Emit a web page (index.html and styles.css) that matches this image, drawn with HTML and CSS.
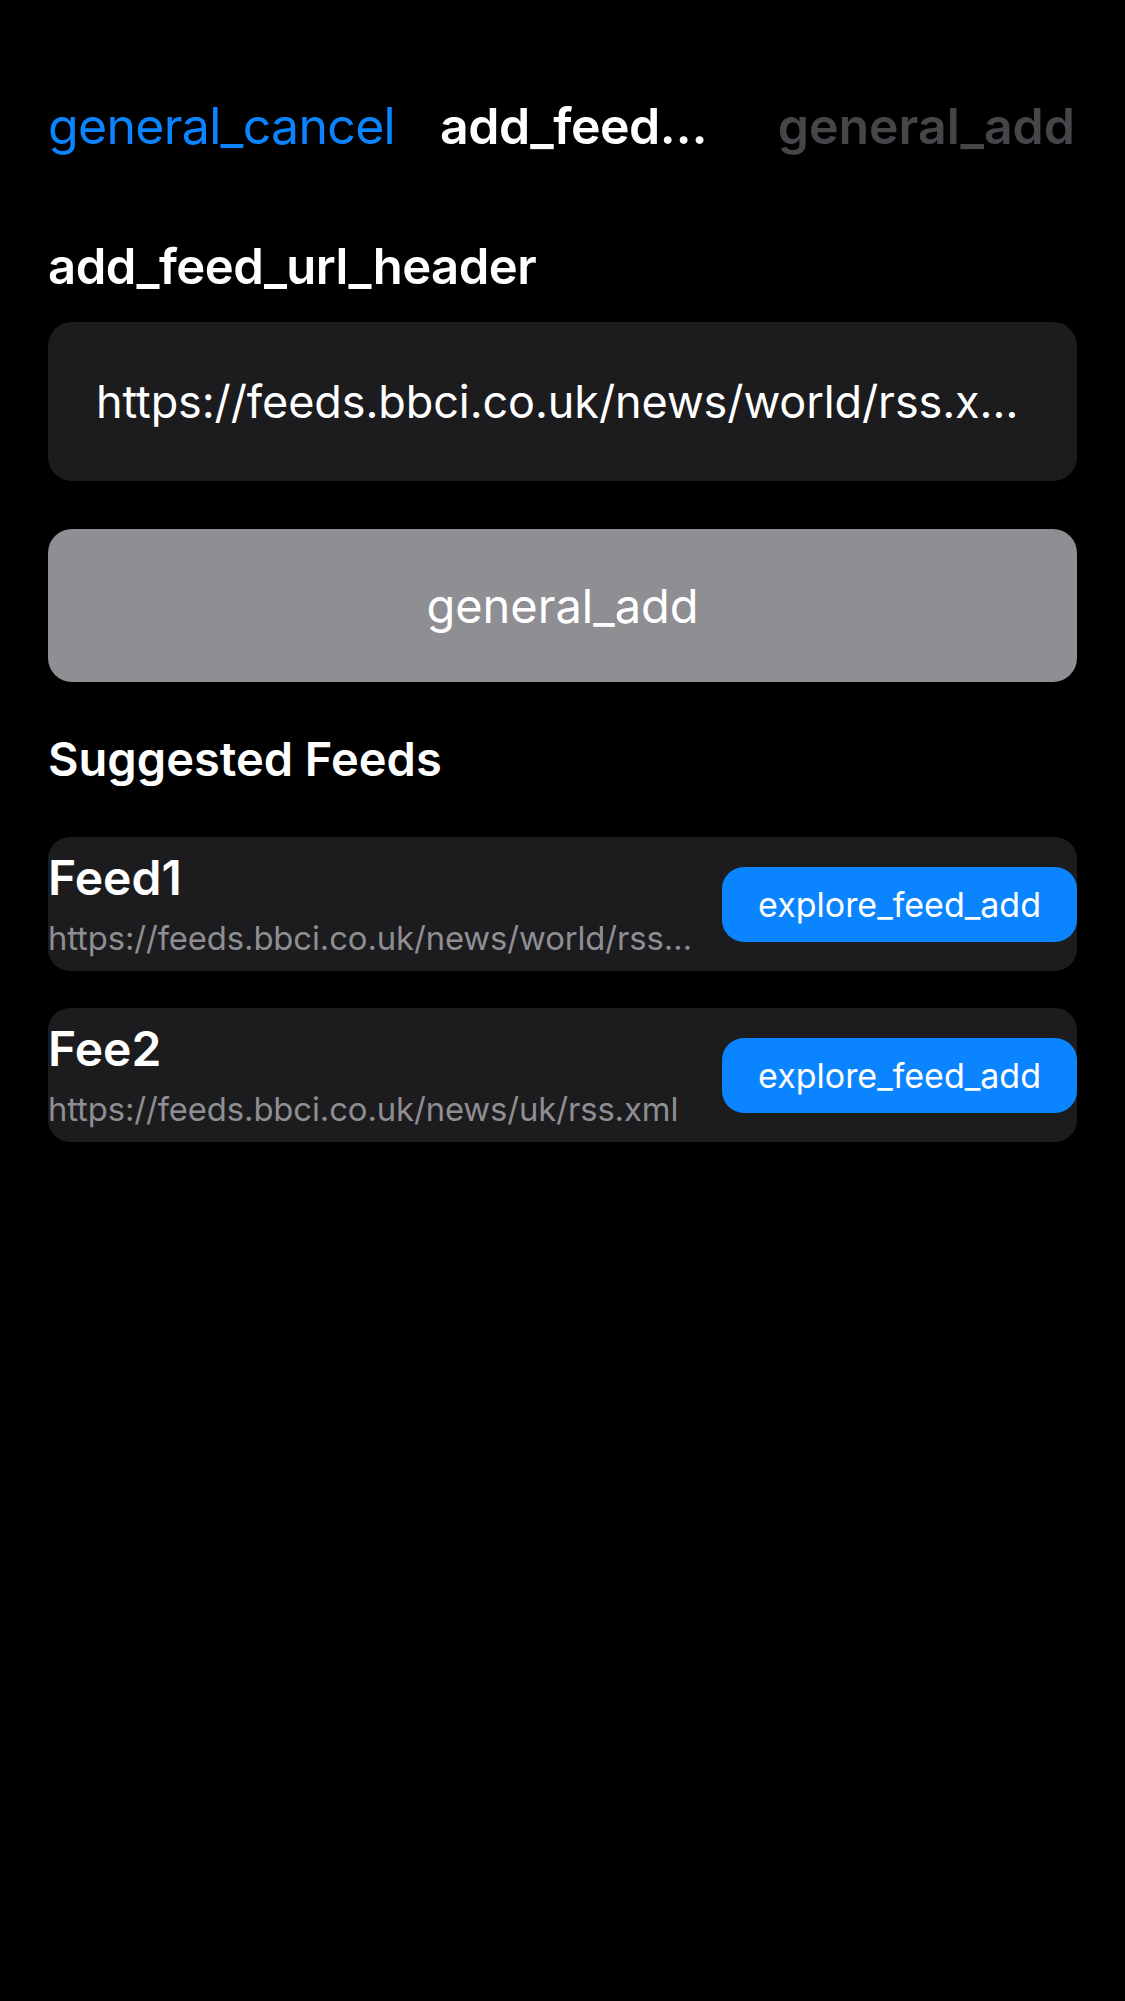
FILE: index.html
```html
<!DOCTYPE html>
<html lang="en">
<head>
<meta charset="utf-8">
<title>Add Feed</title>
<link rel="stylesheet" href="styles.css">
</head>
<body>
<div class="screen">
  <header class="navbar">
    <span class="nav-cancel">general_cancel</span>
    <span class="nav-title">add_feed…</span>
    <span class="nav-add">general_add</span>
  </header>

  <main class="content">
    <h2 class="section-header">add_feed_url_header</h2>
    <div class="url-field"><span class="url-text">https://feeds.bbci.co.uk/news/world/rss.x…</span></div>
    <div class="add-button">general_add</div>

    <h2 class="suggested-header">Suggested Feeds</h2>
    <div class="feed-list">
      <div class="feed-card">
        <div class="feed-info">
          <div class="feed-title">Feed1</div>
          <div class="feed-url">https://feeds.bbci.co.uk/news/world/rss…</div>
        </div>
        <div class="feed-add">explore_feed_add</div>
      </div>
      <div class="feed-card">
        <div class="feed-info">
          <div class="feed-title">Fee2</div>
          <div class="feed-url">https://feeds.bbci.co.uk/news/uk/rss.xml</div>
        </div>
        <div class="feed-add">explore_feed_add</div>
      </div>
    </div>
  </main>
</div>
</body>
</html>
```

FILE: styles.css
```css
html, body {
  margin: 0;
  padding: 0;
  background: #000;
}

body {
  font-family: Inter, "Noto Sans", "DejaVu Sans", sans-serif;
  color: #fff;
  width: 1125px;
  height: 2001px;
  overflow: hidden;
}

.screen {
  padding: 96px 48px 0 48px;
}

.navbar {
  display: grid;
  grid-template-columns: auto minmax(0, 1fr) auto;
  column-gap: 45px;
  align-items: baseline;
  height: 60px;
  line-height: 60px;
  font-size: 50px;
  white-space: nowrap;
}

.nav-cancel {
  color: #0a84ff;
  letter-spacing: -0.7px;
}

.nav-title {
  font-weight: 600;
  color: #fff;
  letter-spacing: -0.5px;
  overflow: hidden;
}

.nav-add {
  font-weight: 600;
  color: #46464a;
  padding-right: 2px;
}

.content {
  display: flex;
  flex-direction: column;
}

.section-header {
  margin: 81px 0 0 0;
  font-size: 49px;
  line-height: 60px;
  font-weight: 600;
  letter-spacing: -0.5px;
}

.url-field {
  margin-top: 25px;
  height: 159px;
  background: #1c1c1e;
  border-radius: 24px;
  display: flex;
  align-items: center;
  padding: 0 40px 0 48px;
}

.url-text {
  font-size: 45px;
  line-height: 60px;
  letter-spacing: -0.1px;
  white-space: nowrap;
}

.add-button {
  margin-top: 48px;
  height: 153px;
  background: #8e8e93;
  border-radius: 24px;
  display: flex;
  align-items: center;
  justify-content: center;
  font-size: 47px;
  color: #fff;
}

.suggested-header {
  margin: 48px 0 0 0;
  font-size: 47px;
  line-height: 58px;
  font-weight: 600;
}

.feed-list {
  margin-top: 49px;
  display: flex;
  flex-direction: column;
  gap: 37px;
}

.feed-card {
  background: #1c1c1e;
  border-radius: 22px;
  display: flex;
  align-items: center;
  justify-content: space-between;
  padding: 10px 0;
  gap: 20px;
}

.feed-info {
  display: flex;
  flex-direction: column;
  gap: 6px;
  min-width: 0;
}

.feed-title {
  font-size: 48px;
  line-height: 62px;
  font-weight: 600;
}

.feed-url {
  font-size: 32.8px;
  line-height: 46px;
  letter-spacing: -0.1px;
  color: #8e8e93;
  white-space: nowrap;
}

.feed-add {
  flex: none;
  height: 75px;
  padding: 0 36px;
  background: #0a84ff;
  border-radius: 22px;
  display: flex;
  align-items: center;
  font-size: 34px;
  color: #fff;
  white-space: nowrap;
}
```
